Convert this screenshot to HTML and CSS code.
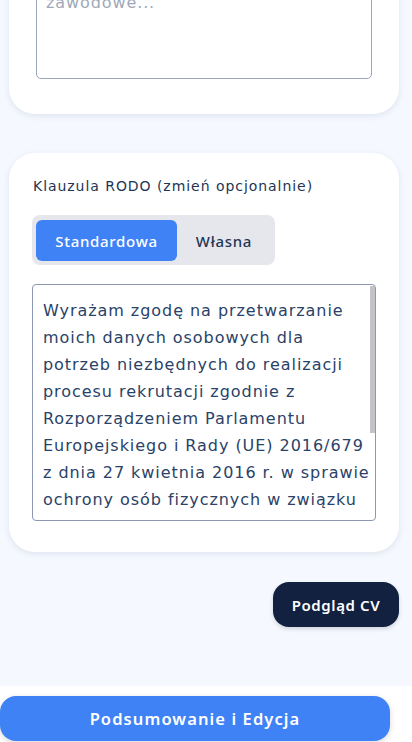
FILE: index.html
```html
<!DOCTYPE html>
<html lang="pl">
<head>
<meta charset="utf-8">
<title>CV</title>
<link rel="stylesheet" href="styles.css">
</head>
<body>
<div class="app">
  <main class="main">
    <div class="content">
      <section class="card card-top">
        <div class="field field-top"><span class="placeholder">zawodowe...</span></div>
      </section>
      <section class="card card-rodo">
        <div class="label">Klauzula RODO (zmień opcjonalnie)</div>
        <div class="segment">
          <button class="seg-btn active">Standardowa</button>
          <button class="seg-btn">Własna</button>
        </div>
        <div class="rodo-wrap">
          <textarea class="rodo" readonly>Wyrażam zgodę na przetwarzanie
moich danych osobowych dla
potrzeb niezbędnych do realizacji
procesu rekrutacji zgodnie z
Rozporządzeniem Parlamentu
Europejskiego i Rady (UE) 2016/679
z dnia 27 kwietnia 2016 r. w sprawie
ochrony osób fizycznych w związku
z przetwarzaniem danych osobowych
i w sprawie swobodnego przepływu
takich danych oraz uchylenia
dyrektywy 95/46/WE (RODO).</textarea>
          <div class="thumb"></div>
        </div>
      </section>
      <div class="actions">
        <button class="preview">Podgląd CV</button>
      </div>
    </div>
  </main>
  <footer class="footer">
    <button class="summary">Podsumowanie i Edycja</button>
  </footer>
</div>
</body>
</html>
```
FILE: styles.css
```css
* { box-sizing: border-box; }
html, body { margin: 0; padding: 0; }
body {
  font-family: "Noto Sans", "Open Sans", sans-serif;
  background: #f5f8ff;
  width: 412px;
  height: 742px;
  overflow: hidden;
}
.app {
  display: flex;
  flex-direction: column;
  height: 742px;
}
.main {
  flex: 1;
  overflow: hidden;
  background: #f5f8ff;
}
.content {
  display: flex;
  flex-direction: column;
  padding: 0 13px 0 9px;
  margin-top: -83px;
}
.card {
  background: #ffffff;
  border-radius: 26px;
  box-shadow: 0 2px 6px rgba(30, 50, 90, 0.10);
}
.card-top {
  padding: 24px 27px 35px 27px;
}
.field-top {
  height: 138px;
  border: 1.5px solid #9aa6bf;
  border-radius: 5px;
  padding: 49px 0 0 9px;
}
.placeholder {
  font-family: "DejaVu Sans", sans-serif;
  color: #a0a8b8;
  font-size: 16px;
  letter-spacing: 0.9px;
  line-height: 20px;
}
.card-rodo {
  margin-top: 39px;
  padding: 23px 23px 31px 23px;
  display: flex;
  flex-direction: column;
}
.label {
  font-family: "DejaVu Sans", sans-serif;
  font-size: 14px;
  color: #1e3556;
  padding-left: 1px;
  letter-spacing: 0.95px;
  line-height: 20px;
}
.segment {
  margin-top: 19px;
  display: flex;
  align-self: flex-start;
  background: #e6e7ec;
  border-radius: 8px;
  padding: 5px 4px 4px 4px;
  width: 243px;
}
.seg-btn {
  font-family: inherit;
  border: 0;
  background: transparent;
  font-size: 15px;
  font-weight: 500;
  color: #1e3556;
  height: 41px;
  padding: 0;
  border-radius: 6px;
  letter-spacing: 0.7px;
}
.seg-btn.active {
  width: 141px;
  background: #3f82f6;
  color: #ffffff;
}
.seg-btn:not(.active) { flex: 1; }
.rodo-wrap {
  position: relative;
  margin-top: 19px;
  width: 344px;
  height: 237px;
}
.rodo {
  display: block;
  width: 100%;
  height: 100%;
  border: 1.5px solid #8c98b2;
  border-radius: 4px;
  padding: 12px 2px 0 10px;
  font-family: "DejaVu Sans", sans-serif;
  font-size: 16px;
  line-height: 27px;
  letter-spacing: 0.95px;
  color: #2a4268;
  resize: none;
  overflow: hidden;
  white-space: pre;
  outline: none;
  background: #fff;
}
.thumb {
  position: absolute;
  top: 1.5px;
  right: 1.5px;
  width: 5px;
  height: 147px;
  background: #c4c4c8;
}
.actions {
  display: flex;
  justify-content: flex-end;
  margin-top: 30px;
}
.preview {
  font-family: inherit;
  background: #11213f;
  color: #ffffff;
  border: 0;
  border-radius: 16px;
  height: 45px;
  width: 126px;
  font-size: 15px;
  font-weight: 600;
  letter-spacing: 0.6px;
  box-shadow: 0 2px 4px rgba(0,0,0,0.15);
}
.footer {
  height: 56px;
  background: #ffffff;
  padding: 10px 22px 1px 0;
  display: flex;
}
.summary {
  flex: 1;
  font-family: inherit;
  background: #3f82f6;
  color: #ffffff;
  border: 0;
  border-radius: 16px;
  font-size: 16.5px;
  font-weight: 600;
  letter-spacing: 1.1px;
  box-shadow: 0 2px 6px rgba(0,0,0,0.15);
}
```
